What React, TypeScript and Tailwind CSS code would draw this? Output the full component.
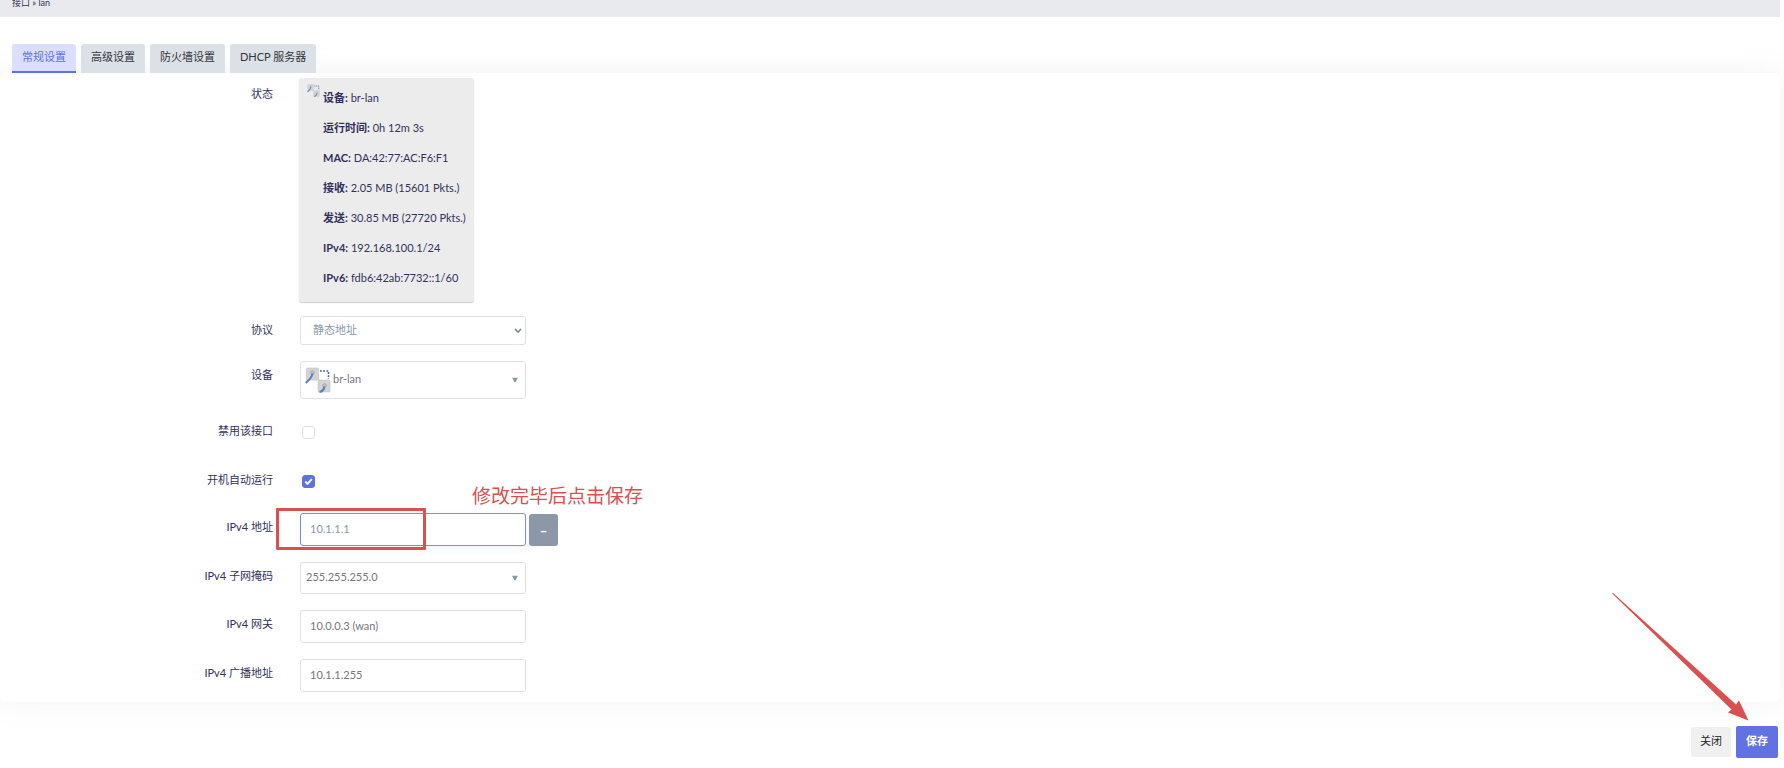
import { useState } from "react";
import type { ReactNode } from "react";
import clsx from "clsx";

const TABS = ["常规设置", "高级设置", "防火墙设置", "DHCP 服务器"];

const STATUS = [
  { label: "设备", value: "br-lan" },
  { label: "运行时间", value: "0h 12m 3s" },
  { label: "MAC", value: "DA:42:77:AC:F6:F1" },
  { label: "接收", value: "2.05 MB (15601 Pkts.)" },
  { label: "发送", value: "30.85 MB (27720 Pkts.)" },
  { label: "IPv4", value: "192.168.100.1/24" },
  { label: "IPv6", value: "fdb6:42ab:7732::1/60" },
];

const FIELD = "w-[226px] rounded-[3px] border border-[#dee2e6] bg-white outline-none";

function BridgeIcon({ className }: { className?: string }) {
  return (
    <svg className={className} viewBox="0 0 26 26" fill="none" aria-hidden="true">
      <path d="M15 4h8.5v8" stroke="#3f63ad" strokeWidth="1.6" strokeDasharray="1.8 1.4" />
      <rect x="1.5" y="1" width="12" height="12" rx="1" fill="#d3d5d2" stroke="#c2c4c1" strokeWidth=".6" />
      <rect x="13" y="13" width="12" height="12" rx="1" fill="#d3d5d2" stroke="#c2c4c1" strokeWidth=".6" />
      <circle cx="7.5" cy="5.5" r="1.8" fill="#c3c5c3" stroke="#9a9d9b" strokeWidth=".7" />
      <circle cx="19.5" cy="18.5" r="1.8" fill="#c3c5c3" stroke="#9a9d9b" strokeWidth=".7" />
      <path d="M7.5 6.5C7 11 3.500 13.500.8 15.800" stroke="#5b82c2" strokeWidth="2.200" />
      <path d="M19.500 19.500C19 22.500 17 24.500 14.500 25" stroke="#5b82c2" strokeWidth="2.200" />
    </svg>
  );
}

function Row({ label, htmlFor, check, children }: {
  label: string; htmlFor?: string; check?: boolean; children: ReactNode;
}) {
  return (
    <div className={clsx("flex items-start", check && "h-[33px]")}>
      <label htmlFor={htmlFor} className={clsx("w-[273px] shrink-0 text-right leading-4", check ? "pt-2" : "pt-[6px]")}>
        {label}
      </label>
      <div className={clsx("flex items-center pl-[27px]", check && "pt-[11px]")}>{children}</div>
    </div>
  );
}

function Combo({ id, value, className, icon }: {
  id: string; value: string; className: string; icon?: ReactNode;
}) {
  return (
    <div className="relative">
      <select id={id} className={clsx(FIELD, "block appearance-none pb-[2px] text-[#74777c]", className)}>
        <option>{value}</option>
      </select>
      {icon}
      <svg className="pointer-events-none absolute right-2 top-1/2 h-[5px] w-[6px] -translate-y-1/2" viewBox="0 0 6 5" aria-hidden="true">
        <path d="M0 0h6L3.500 5h-1z" fill="#8898aa" />
      </svg>
    </div>
  );
}

function CheckBox({ id, checked, onChange }: { id: string; checked: boolean; onChange: (v: boolean) => void }) {
  return (
    <div className="relative ml-[2px] h-[13px] w-[13px]">
      <input
        id={id}
        type="checkbox"
        checked={checked}
        onChange={(e) => onChange(e.target.checked)}
        className="block h-[13px] w-[13px] appearance-none rounded-[3px] border border-[#dee2e6] bg-white checked:border-[#5e72e4] checked:bg-[#5e72e4]"
      />
      {checked && (
        <svg className="pointer-events-none absolute inset-0" viewBox="0 0 13 13" fill="none" aria-hidden="true">
          <path d="M3.200 6.500l2.300 2.300 4.300-4.600" stroke="#fff" strokeWidth="1.900" />
        </svg>
      )}
    </div>
  );
}

export default function App() {
  const [tab, setTab] = useState(0);
  const [disabled, setDisabled] = useState(false);
  const [auto, setAuto] = useState(true);

  return (
    <div className="relative overflow-hidden bg-white pb-[10px] pr-1 font-[Lato,'Noto_Sans_CJK_SC',sans-serif] text-[11px] text-[#32325d]">
      <header className="h-[17px] bg-[#e8eaee] pl-3 text-[9px] leading-[6px]">接口 » lan</header>

      <nav className="mt-[27px] flex gap-[5px] pl-3" role="tablist">
        {TABS.map((name, i) => (
          <button
            key={name}
            role="tab"
            aria-selected={tab === i}
            onClick={() => setTab(i)}
            className={clsx(
              "h-[29px] rounded-t-[3px] border-b-2 px-[10px]",
              tab === i ? "border-[#5e72e4] bg-[#dbdefd] text-[#5e72e4]" : "border-[#dce1e7] bg-[#dce1e7] text-[#32363b]"
            )}
          >
            {name}
          </button>
        ))}
      </nav>

      <main className="rounded-[5px] bg-white pb-[10px] pt-[5px] shadow-[0_0_28px_rgba(136,152,170,0.12)]">
        <div className="flex flex-col gap-4">
          <div className="-mb-[2px] flex items-start">
            <span className="w-[273px] shrink-0 pt-2 text-right leading-4">状态</span>
            <div className="ml-[26px] flex h-[224px] w-[175px] gap-[3px] rounded-[3px] bg-[#ececec] pl-2 pt-[5px] shadow-[0_1px_1px_rgba(0,0,0,0.2)]">
              <BridgeIcon className="mt-[1px] h-[13px] w-[13px] shrink-0" />
              <div className="whitespace-nowrap leading-[30px]">
                {STATUS.map((s) => (
                  <div key={s.label}>
                    <strong>{s.label}:</strong> {s.value}
                  </div>
                ))}
              </div>
            </div>
          </div>

          <Row label="协议" htmlFor="proto">
            <div className="relative">
              <select id="proto" className={clsx(FIELD, "block h-[29px] appearance-none pl-3 text-[#8898aa]")}>
                <option>静态地址</option>
              </select>
              <svg className="pointer-events-none absolute right-1 top-3 h-[6px] w-2" viewBox="0 0 8 6" fill="none" aria-hidden="true">
                <path d="M1 1l3 3 3-3" stroke="#76869a" strokeWidth="1.700" />
              </svg>
            </div>
          </Row>

          <Row label="设备" htmlFor="device">
            <Combo
              id="device"
              value="br-lan"
              className="h-[38px] pl-8"
              icon={<BridgeIcon className="pointer-events-none absolute left-[5px] top-[6px] h-[26px] w-[26px]" />}
            />
          </Row>

          <Row label="禁用该接口" htmlFor="disabled" check>
            <CheckBox id="disabled" checked={disabled} onChange={setDisabled} />
          </Row>

          <Row label="开机自动运行" htmlFor="auto" check>
            <CheckBox id="auto" checked={auto} onChange={setAuto} />
          </Row>

          <Row label="IPv4 地址" htmlFor="ipaddr">
            <div className="relative flex items-center gap-[3px]">
              <input
                id="ipaddr"
                defaultValue="10.1.1.1"
                className="h-[33px] w-[226px] rounded-[3px] border border-[#7a8bea] bg-white px-[9px] pb-[2px] text-[#8898aa] shadow-[0_3px_9px_rgba(50,50,93,0.06)] outline-none"
              />
              <button aria-label="移除" className="h-8 w-[29px] rounded-[3px] bg-[#8c98a8] pt-1 text-[13px] font-black text-white">
                –
              </button>
              {/* callout around the edited address */}
              <div className="pointer-events-none absolute -left-6 -top-[5px] h-[42px] w-[150px] rounded-[1px] border-3 border-[#d9504f]" />
              <span className="pointer-events-none absolute -top-[31px] left-[172px] whitespace-nowrap text-[19px] leading-7 text-[#d9504f]">
                修改完毕后点击保存
              </span>
            </div>
          </Row>

          <Row label="IPv4 子网掩码" htmlFor="netmask">
            <Combo id="netmask" value="255.255.255.0" className="h-8 pl-[5px]" />
          </Row>

          <Row label="IPv4 网关" htmlFor="gateway">
            <input
              id="gateway"
              placeholder="10.0.0.3 (wan)"
              className={clsx(FIELD, "h-[33px] px-[9px] pb-[2px] placeholder:text-[#74777c]")}
            />
          </Row>

          <Row label="IPv4 广播地址" htmlFor="broadcast">
            <input
              id="broadcast"
              placeholder="10.1.1.255"
              className={clsx(FIELD, "h-[33px] px-[9px] pb-[2px] placeholder:text-[#74777c]")}
            />
          </Row>
        </div>
      </main>

      <footer className="relative mt-6 flex items-center justify-end gap-[5px] pr-[2px]">
        <button className="h-[30px] rounded-[3px] bg-[#f0f0f0] px-[9px] pb-[2px] text-[#212529]">关闭</button>
        <button className="h-8 rounded-[2px] bg-[#6272e2] px-[10px] pb-[2px] font-bold text-white">保存</button>
        <svg className="pointer-events-none absolute bottom-[37px] right-[31px] h-[128px] w-[136px] overflow-visible" viewBox="0 0 136 128" aria-hidden="true">
          <path d="M-.8.4L118.500 116.500 115 119.500 135.500 127.500 126 107.500 123 111.500-.2-.2z" fill="#d9504f" />
        </svg>
      </footer>
    </div>
  );
}
